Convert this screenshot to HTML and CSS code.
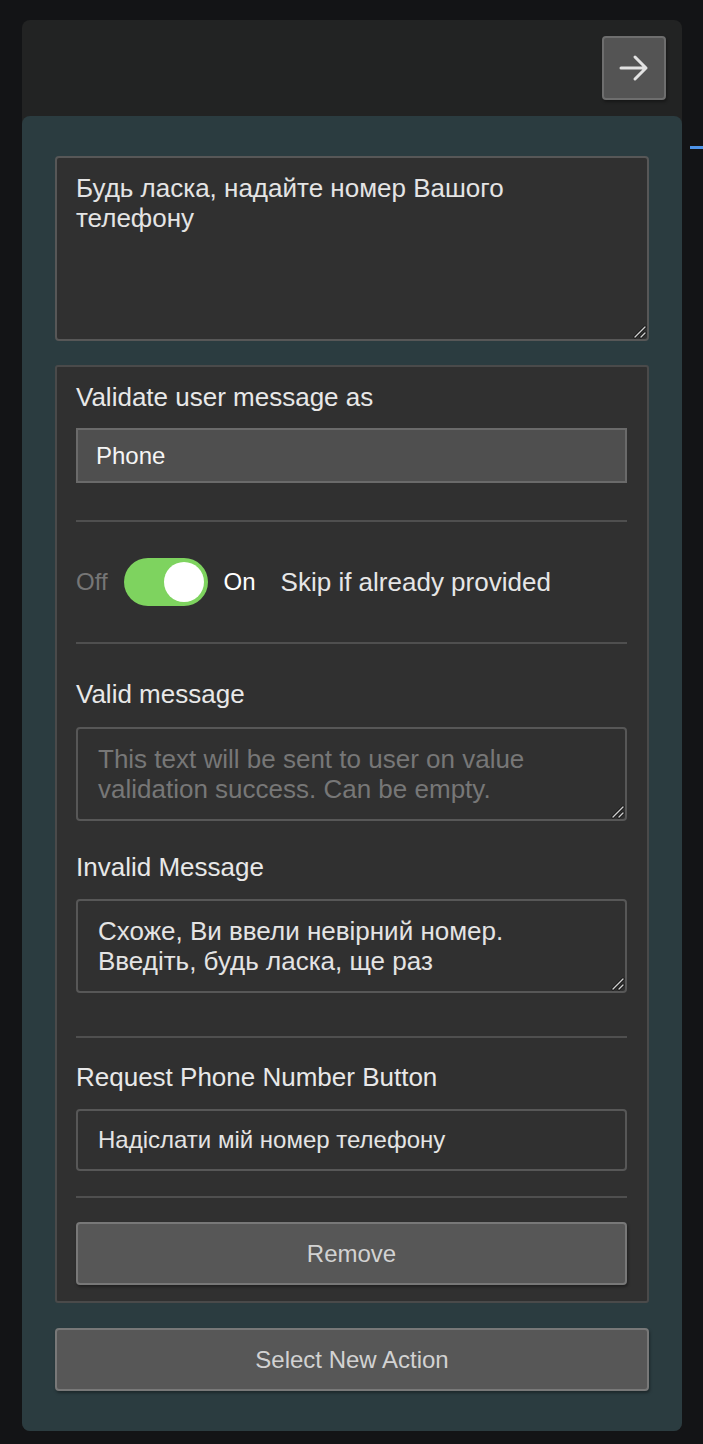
FILE: index.html
```html
<!DOCTYPE html>
<html lang="uk">
<head>
    <meta charset="UTF-8">
    <meta name="viewport" content="width=device-width, initial-scale=1.0">
    <title>Phone Request Node</title>
    <link rel="stylesheet" href="styles.css">
</head>
<body>
    <div class="node">
        <div class="node-head">
            <button class="arrow-btn" title="Next">
                <svg width="30" height="28" viewBox="0 0 30 28" fill="none" stroke="#e2e2e2" stroke-width="3" stroke-linecap="round" stroke-linejoin="round">
                    <path d="M2 14 H27 M16 3 L27 14 L16 25"/>
                </svg>
            </button>
        </div>

        <div class="node-body">
            <textarea class="main-text">Будь ласка, надайте номер Вашого телефону</textarea>

            <div class="settings">
                <label class="field-label">Validate user message as</label>
                <div class="select-box">Phone</div>

                <hr class="sep sep-select">

                <div class="toggle-row">
                    <span class="toggle-off">Off</span>
                    <span class="switch"><span class="knob"></span></span>
                    <span class="toggle-on">On</span>
                    <span class="toggle-text">Skip if already provided</span>
                </div>

                <hr class="sep">

                <label class="field-label after-sep">Valid message</label>
                <textarea class="small-text" placeholder="This text will be sent to user on value validation success. Can be empty."></textarea>

                <label class="field-label after-text">Invalid Message</label>
                <textarea class="small-text">Схоже, Ви ввели невірний номер. Введіть, будь ласка, ще раз</textarea>

                <hr class="sep sep-text">

                <label class="field-label after-hr">Request Phone Number Button</label>
                <input class="text-input" type="text" value="Надіслати мій номер телефону">

                <hr class="sep sep-input">

                <button class="btn remove-btn">Remove</button>
            </div>

            <button class="btn new-action-btn">Select New Action</button>
        </div>
    </div>

    <!-- connector going off to the next node -->
    <div class="connector"></div>
</body>
</html>
```

FILE: styles.css
```css
body {
    margin: 0;
    padding: 20px 21px 12px 22px;
    background: #131416;
    font-family: 'Liberation Sans', Arial, Helvetica, sans-serif;
    color: #e8e8e8;
    position: relative;
    min-height: 1412px;
}
.node {
    width: 660px;
    background: #222323;
    border-radius: 8px;
}
.node-head {
    height: 96px;
    display: flex;
    justify-content: flex-end;
    align-items: flex-start;
    padding: 16px 16px 0 0;
    box-sizing: border-box;
}
.arrow-btn {
    width: 64px;
    height: 64px;
    background: #545454;
    border: 2px solid #6e6e6e;
    border-radius: 4px;
    display: flex;
    align-items: center;
    justify-content: center;
    padding: 0;
    box-shadow: 1px 2px 3px rgba(0, 0, 0, 0.35);
}
.node-body {
    background: #2b3c40;
    border-radius: 8px;
    padding: 40px 33px 40px 33px;
    display: flex;
    flex-direction: column;
}
textarea, input {
    font-family: inherit;
    font-size: 26px;
    line-height: 30px;
    color: #e4e4e4;
    background: #303030;
    border: 2px solid #575757;
    border-radius: 4px;
    box-sizing: border-box;
    width: 100%;
    margin: 0;
    outline: none;
}
textarea::placeholder {
    color: #777777;
}
textarea::-webkit-resizer {
    background: url("data:image/svg+xml,%3Csvg xmlns='http://www.w3.org/2000/svg' width='15' height='15'%3E%3Cg stroke-linecap='round'%3E%3Cpath d='M3 13 L13 3 M9 13 L13 9' stroke='%23111' stroke-width='3'/%3E%3Cpath d='M3 13 L13 3 M9 13 L13 9' stroke='%23cfcfcf' stroke-width='1.4'/%3E%3C/g%3E%3C/svg%3E") no-repeat right bottom;
}
.main-text {
    height: 185px;
    padding: 15px 19px;
    resize: vertical;
}
.settings {
    margin-top: 24px;
    background: #303030;
    border: 2px solid #4a4a4a;
    border-radius: 3px;
    padding: 15px 20px 16px 19px;
    display: flex;
    flex-direction: column;
}
.field-label {
    display: block;
    font-size: 26px;
    line-height: 30px;
    color: #e8e8e8;
}
.field-label.after-sep {
    margin-top: 35px;
}
.field-label.after-text {
    margin-top: 31px;
}
.field-label.after-hr {
    margin-top: 24px;
}
.select-box {
    margin-top: 16px;
    height: 55px;
    box-sizing: border-box;
    background: #4f4f4f;
    border: 2px solid #6a6a6a;
    padding: 0 18px;
    display: flex;
    align-items: center;
    font-size: 24px;
    color: #f5f5f5;
}
.sep {
    border: none;
    height: 2px;
    background: #4f4f4f;
    margin: 0;
}
.sep-select {
    margin-top: 37px;
}
.sep-text {
    margin-top: 43px;
}
.sep-input {
    margin-top: 25px;
}
.toggle-row {
    display: flex;
    align-items: center;
    height: 48px;
    margin: 36px 0;
    font-size: 24px;
}
.toggle-off {
    color: #767676;
}
.switch {
    width: 84px;
    height: 48px;
    margin: 0 16px;
    border-radius: 24px;
    background: #7ed35f;
    display: flex;
    align-items: center;
    justify-content: flex-end;
    padding-right: 4px;
    box-sizing: border-box;
}
.knob {
    width: 40px;
    height: 40px;
    border-radius: 50%;
    background: #ffffff;
}
.toggle-on {
    color: #ffffff;
    margin-right: 25px;
}
.toggle-text {
    font-size: 26px;
    color: #e6e6e6;
}
.small-text {
    margin-top: 18px;
    height: 94px;
    padding: 15px 20px;
    resize: vertical;
}
.after-text + .small-text {
    margin-top: 17px;
}
.text-input {
    margin-top: 17px;
    height: 62px;
    padding: 0 20px;
    font-size: 24px;
}
.btn {
    font-family: inherit;
    font-size: 24px;
    color: #d2d2d2;
    background: #575757;
    border: 2px solid #787878;
    border-radius: 4px;
    height: 63px;
    width: 100%;
    box-shadow: 1px 2px 3px rgba(0, 0, 0, 0.35);
}
.remove-btn {
    margin-top: 24px;
}
.new-action-btn {
    margin-top: 25px;
}
.connector {
    position: absolute;
    left: 690px;
    top: 146px;
    width: 13px;
    height: 3px;
    background: #4d93e8;
}
```
